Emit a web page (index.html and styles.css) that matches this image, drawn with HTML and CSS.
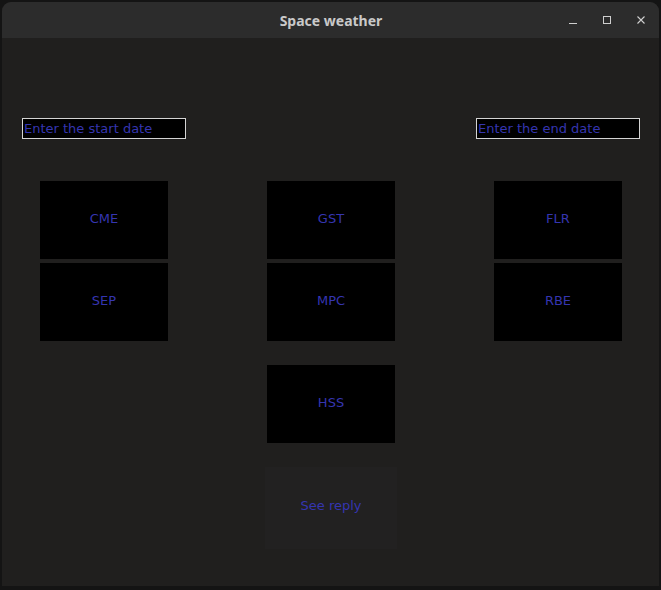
FILE: index.html
```html
<!DOCTYPE html>
<html>
<head>
<meta charset="utf-8">
<title>Space weather</title>
<link rel="stylesheet" href="styles.css">
</head>
<body>
<div class="window">
  <header class="titlebar">
    <span class="title">Space weather</span>
    <div class="controls">
      <svg class="ctl" width="10" height="10" viewBox="0 0 10 10"><path d="M1 8.5h8" stroke="#cfcfcf" stroke-width="1"/></svg>
      <svg class="ctl" width="10" height="10" viewBox="0 0 10 10"><rect x="1.5" y="1.5" width="7" height="7" fill="none" stroke="#cfcfcf" stroke-width="1"/></svg>
      <svg class="ctl" width="10" height="10" viewBox="0 0 10 10"><path d="M1.5 1.5l7 7M8.5 1.5l-7 7" stroke="#cfcfcf" stroke-width="1.1"/></svg>
    </div>
  </header>
  <main class="content">
    <div class="dates">
      <input class="date" type="text" placeholder="Enter the start date">
      <input class="date" type="text" placeholder="Enter the end date">
    </div>
    <div class="grid">
      <button class="btn">CME</button>
      <button class="btn">GST</button>
      <button class="btn">FLR</button>
      <button class="btn">SEP</button>
      <button class="btn">MPC</button>
      <button class="btn">RBE</button>
      <button class="btn hss">HSS</button>
      <button class="btn reply">See reply</button>
    </div>
  </main>
</div>
</body>
</html>
```

FILE: styles.css
```css
html, body {
  margin: 0;
  padding: 0;
  background: #141414;
  width: 661px;
  height: 590px;
  overflow: hidden;
}
.window {
  margin: 2px 0 0 2px;
  width: 657px;
  height: 584px;
  background: #201f1e;
  border-radius: 9px 9px 0 0;
  overflow: hidden;
  display: flex;
  flex-direction: column;
}
.titlebar {
  height: 36px;
  flex: none;
  background: #2c2c2c;
  position: relative;
  display: flex;
  align-items: center;
  justify-content: center;
}
.title {
  font-family: "Noto Sans", "DejaVu Sans", sans-serif;
  font-weight: bold;
  font-size: 14px;
  color: #c9c9c9;
  margin-left: 1px;
  margin-top: 1px;
}
.controls {
  position: absolute;
  right: 13px;
  top: 13px;
  display: flex;
  gap: 24px;
}
.ctl {
  display: block;
}
.content {
  flex: 1;
  display: flex;
  flex-direction: column;
}
.dates {
  margin-top: 80px;
  padding: 0 19px 0 20px;
  display: flex;
  justify-content: space-between;
}
.date {
  box-sizing: border-box;
  width: 164px;
  height: 21px;
  margin: 0;
  padding: 0 1px;
  border: 1px solid #d4d4d4;
  background: #000;
  color: #3535b0;
  font-family: "DejaVu Sans", sans-serif;
  font-size: 13px;
  outline: none;
}
.date::placeholder {
  color: #3535b0;
  opacity: 1;
}
.grid {
  margin: 42px 0 0 38px;
  display: grid;
  grid-template-columns: repeat(3, 128px);
  grid-auto-rows: 78px;
  column-gap: 99px;
  row-gap: 4px;
}
.btn {
  box-sizing: border-box;
  margin: 0;
  padding: 0 0 4px;
  border: none;
  background: #000;
  color: #3535b0;
  font-family: "DejaVu Sans", sans-serif;
  font-size: 13px;
  width: 128px;
  height: 78px;
}
.hss {
  grid-column: 2;
  margin-top: 20px;
}
.reply {
  grid-column: 2;
  width: 132px;
  height: 82px;
  padding-bottom: 6px;
  margin: 40px 0 0 -2px;
  background: #222121;
}
```
